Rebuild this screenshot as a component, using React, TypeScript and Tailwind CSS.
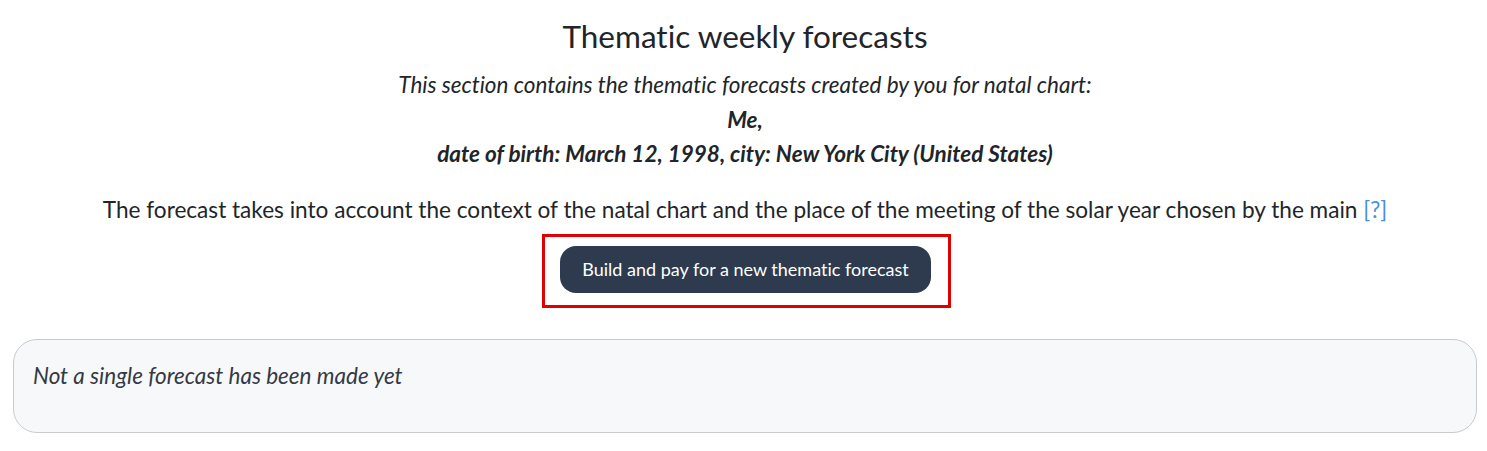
export default function App() {
  return (
    <div
      className="min-h-screen bg-white text-[#212529] pl-[13px] pr-[10px] pt-[14px] [font-variant-ligatures:none]"
      style={{ fontFamily: "Lato, 'Noto Sans', sans-serif" }}
    >
      <h1 className="text-center text-[31.5px] leading-[44px] font-normal">
        Thematic weekly forecasts
      </h1>
      <p className="mt-[12px] text-center text-[22.5px] leading-[30px] italic">
        This section contains the thematic forecasts created by you for natal chart:
      </p>
      <p className="mt-[3px] text-center text-[22.5px] leading-[34px] italic font-bold">
        Me,
        <br />
        date of birth: March 12, 1998, city: New York City (United States)
      </p>
      <p className="mt-[24px] text-center text-[22.6px] leading-[30px]">
        The forecast takes into account the context of the natal chart and the place of the meeting of the solar year chosen by the main{" "}
        <a className="text-[#4a8fdb]">[?]</a>
      </p>
      <div className="mt-[9px] flex justify-center pl-[3px]">
        <div className="border-[3px] border-[#e00000] pl-[15px] pr-[17px] pt-[9px] pb-[12px]">
          <button className="h-[47px] w-[371px] rounded-[16px] bg-[#2e3b4e] text-[18px] text-white">
            Build and pay for a new thematic forecast
          </button>
        </div>
      </div>
      <div className="mt-[31px] h-[94px] rounded-[24px] border border-[#c9cbcf] bg-[#f7f8fa] px-[19px] pt-[21px]">
        <p className="text-[22.5px] leading-[30px] italic text-[#333a45]">
          Not a single forecast has been made yet
        </p>
      </div>
    </div>
  );
}
